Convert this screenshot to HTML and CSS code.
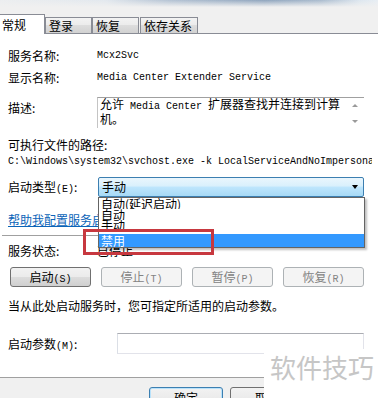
FILE: index.html
```html
<!DOCTYPE html>
<html lang="zh-CN">
<head>
    <meta charset="UTF-8">
    <title>Mcx2Svc 的属性</title>
    <link rel="stylesheet" href="styles.css">
</head>
<body>
    <!-- 标题栏残影 -->
    <div class="titlebar"></div>

    <!-- 选项卡 -->
    <div class="tabs">
        <div class="tab active">常规</div>
        <div class="tab t2">登录</div>
        <div class="tab t3">恢复</div>
        <div class="tab t4">依存关系</div>
    </div>

    <div class="page">
        <div class="row r1"><span>服务名称:</span><span class="en">Mcx2Svc</span></div>
        <div class="row r2"><span>显示名称:</span><span class="en">Media Center Extender Service</span></div>
        <div class="row r3">
            <span class="desc-label">描述:</span>
            <div class="desc">
                <div class="desc-text">允许<span class="en"> Media Center </span>扩展器查找并连接到计算机。</div>
                <div class="scroll"><i class="up"></i><i class="down"></i></div>
            </div>
        </div>
        <div class="r4">可执行文件的路径:</div>
        <div class="path en">C:\Windows\system32\svchost.exe -k LocalServiceAndNoImpersonation</div>
        <div class="row r6">
            <span>启动类型<span class="en">(E)</span>:</span>
            <div class="combo"><span>手动</span><i class="arrow"></i></div>
        </div>
        <div class="r7"><a href="#">帮助我配置服务启动选项。</a></div>
        <div class="sep"></div>
        <div class="row r8"><span>服务状态:</span><span>已停止</span></div>
        <div class="btns">
            <button class="btn">启动<span class="en">(S)</span></button>
            <button class="btn disabled">停止<span class="en">(T)</span></button>
            <button class="btn disabled">暂停<span class="en">(P)</span></button>
            <button class="btn disabled">恢复<span class="en">(R)</span></button>
        </div>
        <div class="r10">当从此处启动服务时，您可指定所适用的启动参数。</div>
        <div class="row r11">
            <span>启动参数<span class="en">(M)</span>:</span>
            <div class="input"></div>
        </div>

        <!-- 下拉列表 -->
        <div class="dropdown">
            <div class="item i1">自动(延迟启动)</div>
            <div class="item i2">自动</div>
            <div class="item i3">手动</div>
            <div class="gap"></div>
            <div class="item sel">禁用</div>
        </div>
        <div class="mark"></div>
    </div>

    <div class="footer">
        <button class="btn ok">确定</button>
        <button class="btn">取消</button>
    </div>

    <div class="watermark">软件技巧</div>
</body>
</html>
```

FILE: styles.css
```css
body {
    margin: 0; width: 378px; height: 398px; overflow: hidden; position: relative;
    font-family: "Noto Sans CJK SC", sans-serif; font-size: 12px; color: #000;
    background: #f0f0f0;
}
.en { font-family: "Liberation Mono", monospace; font-size: 10px; }

/* 标题栏 */
.titlebar {
    height: 7px;
    background:
        linear-gradient(rgba(240,240,240,0), #f0f0f0),
        linear-gradient(to right, #eceef0 0%, #e2e8ee 28%, #b3c2d3 45%, #8ea4bd 70%, #a9bbce 85%, #dce6ef 95%, #e8eef4 100%);
}

/* 选项卡 */
.tabs {
    display: flex; align-items: flex-end; height: 26px;
    border-bottom: 1px solid #898c95;
}
.tab {
    box-sizing: border-box; height: 16px; padding-left: 3px; line-height: 15px;
    border: 1px solid #898c95; border-bottom: none;
    background: linear-gradient(#f3f3f3, #ebebeb 50%, #dddddd 50%, #d2d2d2);
}
.tab.active {
    width: 45px; height: 20px; margin-bottom: -1px; padding-left: 2px; line-height: 20px;
    border-left: none; background: #fff;
}
.t2 { width: 47px; }
.t3 { width: 47px; }
.t4 { width: 58px; margin-left: 1px; }

/* 内容页 */
.page {
    position: relative; box-sizing: border-box; height: 344px;
    padding: 0 14px 0 8px; background: #fff;
    border-bottom: 1px solid #a0a0a0;
    line-height: 14px;
}
.row { display: grid; grid-template-columns: 89px 1fr; }
.r1 { padding-top: 15px; }
.r2 { margin-top: 8px; }
.r3 { margin-top: 12px; }
.desc-label { padding-top: 4px; }
.desc {
    display: flex; height: 30px; width: 266px;
    border-top: 1px solid #a0a0a0; border-left: 1px solid #c4c4c4;
    line-height: 12px;
}
.desc-text { flex: 1; padding-left: 2px; }
.scroll { width: 17px; position: relative; }
.scroll i { position: absolute; left: 5px; width: 0; height: 0; border-left: 3px solid transparent; border-right: 3px solid transparent; }
.scroll .up { top: 6px; border-bottom: 3px solid #9a9a9a; }
.scroll .down { top: 22px; border-top: 3px solid #9a9a9a; }

.r4 { margin-top: 10px; }
.path { margin-top: 3px; margin-right: -8px; white-space: nowrap; overflow: hidden; line-height: 14px; }

.r6 { margin-top: 8px; line-height: 20px; }
.combo {
    display: flex; justify-content: space-between; align-items: center;
    box-sizing: border-box; height: 20px; margin-left: 1px; padding: 0 5px 0 3px;
    border: 1px solid #3c7fb1; border-radius: 2px;
    background: linear-gradient(#eaf6fd 0%, #d9f0fc 45%, #bee6fd 50%, #a7d9f5 100%);
    line-height: 18px;
}
.arrow { width: 0; height: 0; border-left: 3.5px solid transparent; border-right: 3.5px solid transparent; border-top: 4px solid #000; }

.r7 { margin-top: 13px; }
.r7 a { color: #0b64b8; }
.sep { margin: 8px 0 0 -6px; border-top: 1px solid #a0a0a0; }
.r8 { margin-top: 8px; }

.btns { display: flex; gap: 10px; margin-top: 9px; padding-left: 2px; }
.btn {
    box-sizing: border-box; width: 81px; height: 20px; padding: 0;
    font-family: "Noto Sans CJK SC", sans-serif; font-size: 12px; color: #000; line-height: 18px;
    border: 1px solid #707070; border-radius: 3px;
    background: linear-gradient(#f2f2f2, #ebebeb 50%, #dddddd 50%, #cfcfcf);
}
.btn.disabled { border-color: #adb2b5; background: #f4f4f4; color: #838383; }

.r10 { margin-top: 12px; }
.r11 { margin-top: 20px; grid-template-columns: 109px 1fr; line-height: 21px; }
.input {
    box-sizing: border-box; height: 21px;
    border: 1px solid #e2e3ea; border-top-color: #abadb3; border-left-color: #dbdfe6;
}

/* 下拉列表 */
.dropdown {
    position: absolute; left: 98px; top: 163px; width: 267px; box-sizing: border-box;
    background: #fff; border: 1px solid #646464;
    box-shadow: 2px 2px 2px rgba(0,0,0,0.25);
}
.item { padding-left: 2px; overflow: hidden; }
.i1, .i2 { height: 11px; line-height: 11px; }
.i3 { height: 10px; line-height: 10px; }
.gap { height: 4px; }
.item.sel { height: 13px; line-height: 13px; background: #3399ff; color: #fff; }

.mark {
    position: absolute; left: 83px; top: 195px; width: 131px; height: 26px;
    box-sizing: border-box; border: 3px solid #c7383f;
}

/* 底部按钮 */
.footer { display: flex; gap: 7px; padding: 9px 0 0 149px; }
.footer .btn { width: 74px; height: 22px; }
.btn.ok { border-color: #3c7fb1; box-shadow: inset 0 0 0 1px #b9e2fb; }

.watermark {
    position: absolute; left: 264px; top: 349px; width: 114px; height: 49px;
    box-sizing: border-box; padding: 5px 0 0 6px;
    background: #fff; color: #c6c6c6; font-size: 26px; line-height: 26px;
}
```
